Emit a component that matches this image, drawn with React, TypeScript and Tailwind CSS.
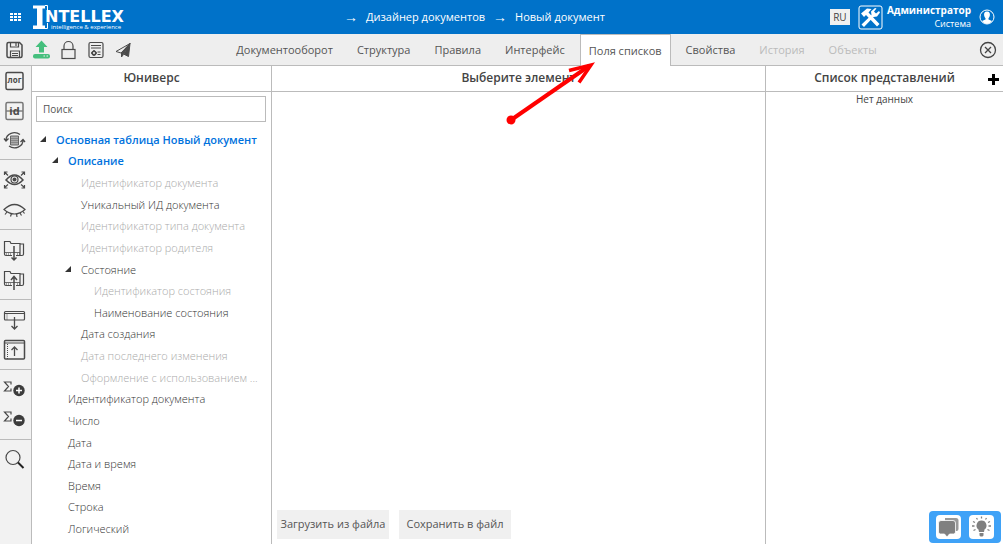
import { useState, ReactNode } from "react";
import clsx from "clsx";

type TreeItem = {
  text: string;
  level: number;
  open?: boolean;
  main?: boolean;
  disabled?: boolean;
};

const tree: TreeItem[] = [
  { text: "Основная таблица Новый документ", level: 0, open: true, main: true },
  { text: "Описание", level: 1, open: true, main: true },
  { text: "Идентификатор документа", level: 2, disabled: true },
  { text: "Уникальный ИД документа", level: 2 },
  { text: "Идентификатор типа документа", level: 2, disabled: true },
  { text: "Идентификатор родителя", level: 2, disabled: true },
  { text: "Состояние", level: 2, open: true },
  { text: "Идентификатор состояния", level: 3, disabled: true },
  { text: "Наименование состояния", level: 3 },
  { text: "Дата создания", level: 2 },
  { text: "Дата последнего изменения", level: 2, disabled: true },
  { text: "Оформление с использованием ...", level: 2, disabled: true },
  { text: "Идентификатор документа", level: 1 },
  { text: "Число", level: 1 },
  { text: "Дата", level: 1 },
  { text: "Дата и время", level: 1 },
  { text: "Время", level: 1 },
  { text: "Строка", level: 1 },
  { text: "Логический", level: 1 },
];

const indents = ["pl-[5px]", "pl-[17px]", "pl-[30px]", "pl-[43px]"];

const tabs = [
  { name: "Документооборот" },
  { name: "Структура" },
  { name: "Правила" },
  { name: "Интерфейс" },
  { name: "Поля списков" },
  { name: "Свойства" },
  { name: "История", disabled: true },
  { name: "Объекты", disabled: true },
];

const Icon = ({ children }: { children: ReactNode }) => (
  <svg
    width="24"
    height="24"
    viewBox="0 0 24 24"
    fill="none"
    stroke="#4a4a4a"
    strokeWidth="1.5"
    aria-hidden="true"
  >
    {children}
  </svg>
);

const toolbar = [
  {
    label: "Сохранить",
    icon: (
      <>
        <path d="M6.500 4.500h11l2.500 2.500v11q0 1.500-1.500 1.500h-12q-1.500 0-1.500-1.500V6q0-1.500 1.500-1.500z" />
        <path d="M8.500 4.500v4.500h8V4.500M14 5v3M8.500 19.500v-6.500h9v6.500M10 15.500h6M10 17.500h6" strokeWidth="1.200" />
      </>
    ),
  },
  {
    label: "Опубликовать",
    icon: (
      <>
        <path d="M12.500 2.500l6 6.500h-3.500v5.500h-5V9H6.500z" fill="#45bf7d" stroke="none" />
        <rect x="4" y="16" width="17" height="4.500" rx="2" fill="#45bf7d" stroke="none" />
        <path d="M14.500 18h1.500M17.500 18h1.500" stroke="#eee" strokeWidth="1" />
      </>
    ),
  },
  {
    label: "Заблокировать",
    icon: (
      <>
        <rect x="6" y="11.500" width="13" height="9" strokeWidth="1.200" />
        <path d="M8 11.500V8a4.500 4.500 0 0 1 9 0v3.500" strokeWidth="1.200" />
      </>
    ),
  },
  {
    label: "Настройки документа",
    icon: (
      <>
        <rect x="6" y="4.500" width="14" height="15" rx="1.500" strokeWidth="1.200" />
        <path d="M8 7.500h10M8 10h10M14.500 14h3M14.500 16.500h3" strokeWidth="1" />
        <circle cx="11" cy="15" r="1.800" />
        <path d="M11 12v6M8 15h6" strokeDasharray="1.200 3.600" />
      </>
    ),
  },
  {
    label: "Отправить",
    icon: (
      <>
        <path d="M20 5.500L18.500 18.500l-5-2.500zM20 5.500L11.500 15v4l2-2.500" fill="#4a4a4a" strokeWidth="1" />
        <path d="M20 5.500L6 13.500l5 1.500z" strokeWidth="1" />
      </>
    ),
  },
];

const folder = (
  <>
    <path d="M10 17.500H4q-1.500 0-1.500-1.500V3.500H8l1 2h9v12h-4M18 6h3.500v10q0 1.500-1.500 1.500h-2" strokeWidth="1.200" />
    <path d="M3 14.500h15" strokeWidth="0.800" />
    <path d="M4 16h5M15 16h3" strokeWidth="1.200" strokeDasharray="1 1" />
  </>
);

const sigma = (
  <path d="M9 6.500V4H2.500l4 4.500-4 4.500H9v-2.500" strokeWidth="1.200" />
);

const sideGroups = [
  [
    {
      label: "Логическое имя",
      icon: (
        <>
          <rect x="4" y="3.500" width="17" height="17" rx="1.500" />
          <text x="12.500" y="13.500" textAnchor="middle" fontSize="8" fontWeight="700" fill="#4a4a4a" stroke="none">
            лог
          </text>
        </>
      ),
    },
    {
      label: "Скрыть идентификаторы",
      icon: (
        <>
          <rect x="4" y="3.500" width="17" height="17" rx="1.500" stroke="#777" />
          <text x="12.500" y="16" textAnchor="middle" fontSize="11" fontWeight="700" fill="#4a4a4a" stroke="none">
            id
          </text>
          <path d="M4.500 12h16" strokeWidth="1" />
        </>
      ),
    },
    {
      label: "Обновить",
      icon: (
        <>
          <path d="M8.500 7h8v9h-8z" fill="#aaa" stroke="#666" strokeWidth="1" />
          <path d="M8.500 9.500h8M8.500 11.500h8M8.500 13.500h8" stroke="#666" strokeWidth="0.500" />
          <path d="M4 11a8.500 7.500 0 0 1 14-5.500M21 11a8.500 7.500 0 0 1-14 6M2 9.500l2 2.500 2.500-2.500M23 13l-2-2.500-2.500 2.500" strokeWidth="1.300" />
        </>
      ),
    },
  ],
  [
    {
      label: "Показать все",
      icon: (
        <>
          <path d="M4 12q8.500-10 17 0-8.500 9-17 0z" />
          <circle cx="12.500" cy="11.500" r="3.500" strokeWidth="1.200" />
          <circle cx="12.500" cy="11.500" r="2" fill="#4a4a4a" stroke="none" />
          <path d="M6 7.500L2.500 4M2.500 7V4h3M19 7.500L22.500 4M19.500 4h3v3M6 16.500L2.500 19.500M2.500 17v3h3M19 16.500l3.500 3M19.500 20h3v-3" strokeWidth="1.200" />
        </>
      ),
    },
    {
      label: "Скрыть",
      icon: (
        <>
          <path d="M2 11.500q10.500-10 21 0-10.500 9-21 0z" strokeWidth="1.200" />
          <path d="M5 14l-2 2.500M9.500 15.500l-1 3M14.500 16l.5 3M18 15l1.500 2.500M21 13.500l1.500 2" strokeWidth="1.200" />
        </>
      ),
    },
  ],
  [
    {
      label: "Загрузить в папку",
      icon: (
        <>
          {folder}
          <path d="M12 8v14M9.500 19.500l2.500 2.500 2.500-2.500" />
        </>
      ),
    },
    {
      label: "Выгрузить из папки",
      icon: (
        <>
          {folder}
          <path d="M12 22V9M9 12l3-3.500 3 3.500" />
        </>
      ),
    },
  ],
  [
    {
      label: "Добавить ниже",
      icon: (
        <>
          <rect x="2.500" y="3.500" width="20" height="8.500" rx="1" strokeWidth="1.200" />
          <path d="M2.500 5.500h20" strokeWidth="1" />
          <path d="M5 6.500v5" strokeWidth="1" strokeDasharray="1 1" />
          <path d="M12.500 9v11.500M9.500 18l3 3 3-3" strokeWidth="1.300" />
        </>
      ),
    },
    {
      label: "Добавить внутрь",
      icon: (
        <>
          <rect x="2.500" y="2.500" width="20" height="18.500" rx="1" />
          <path d="M2.500 5h20" strokeWidth="1" />
          <path d="M5.500 6v15" strokeWidth="1" strokeDasharray="1 1" />
          <path d="M12.500 18V9M9.500 12l3-3 3 3" strokeWidth="1.300" />
        </>
      ),
    },
  ],
  [
    {
      label: "Добавить сумму",
      icon: (
        <>
          {sigma}
          <circle cx="17" cy="12.500" r="5.700" fill="#3c3c3c" stroke="none" />
          <path d="M14 12.500h6M17 9.500v6" stroke="#fff" />
        </>
      ),
    },
    {
      label: "Убрать сумму",
      icon: (
        <>
          {sigma}
          <circle cx="17" cy="12.500" r="5.700" fill="#3c3c3c" stroke="none" />
          <path d="M14 12.500h6" stroke="#fff" />
        </>
      ),
    },
  ],
  [
    {
      label: "Найти",
      icon: (
        <>
          <circle cx="11" cy="9.500" r="7" strokeWidth="1.200" />
          <path d="M16 14.500l5.500 5.500" strokeWidth="2" stroke="#222" />
        </>
      ),
    },
  ],
];

const Logo = () => (
  <svg width="94" height="28" viewBox="0 0 94 28" fill="#fff" role="img" aria-label="Intellex">
    <path d="M0 2.500h12v3H9.500v17H12V26H0v-3.500h4v-17H0z" />
    <path d="M12 2.500h2.500V8M12 25.500h2.500V20" fill="none" stroke="#fff" />
    <text x="12" y="19" fontSize="16" fontWeight="700" className="font-['DejaVu_Sans',sans-serif]">
      NTELLEX
    </text>
    <text x="18" y="26" fontSize="6">
      intelligence &amp; experience
    </text>
  </svg>
);

const Header = () => (
  <header className="flex h-[34px] shrink-0 items-center bg-[#0072c9] text-white">
    <button aria-label="Меню" className="flex w-[31px] justify-center">
      <svg width="11" height="9" viewBox="0 0 11 9" fill="#fff">
        {[0, 3, 6].map((y) =>
          [0, 4, 8].map((x) => <rect key={`${x}-${y}`} x={x} y={y} width="3" height="2" />)
        )}
      </svg>
    </button>
    <a href="#" className="ml-[2px]">
      <Logo />
    </a>
    <nav className="flex flex-1 items-center justify-center gap-2 pr-2 text-[11px]">
      <span className="text-sm leading-4">→</span>
      <a href="#">Дизайнер документов</a>
      <span className="text-sm leading-4">→</span>
      <a href="#">Новый документ</a>
    </nav>
    <button className="h-4 w-5 bg-[#f0f0f0] text-[10px] leading-4 text-[#444]">RU</button>
    <button aria-label="Инструменты" className="ml-2">
      <svg width="25" height="25" viewBox="0 0 25 25" fill="none" stroke="#fff">
        <rect x="1" y="1" width="23" height="23" rx="2" />
        <path d="M3 8.500l6-5 4.500.5-3 3.500L21.500 19 19 21.500 8 10l-2 2z" fill="#fff" stroke="none" />
        <path d="M3.500 19.500l10-9.500-.5-3.500 4-3.500 1.500.5-2.500 3 2 2 3-2.500 1 1.500-3 4-3.500.5L6 22z" fill="#fff" stroke="none" />
      </svg>
    </button>
    <div className="ml-1 text-right text-[10px] leading-[13px]">
      <div className="font-bold">Администратор</div>
      <div className="text-[9px]">Система</div>
    </div>
    <button aria-label="Профиль" className="mx-2">
      <svg width="16" height="16" viewBox="0 0 16 16">
        <circle cx="8" cy="8" r="7" fill="none" stroke="#fff" />
        <path d="M8 2.500c2.500 0 3.300 2 2.800 4.200-.3 1.300-.8 2-1.300 2.500v1.300l3.500 1.500A6.500 6.500 0 0 1 8 15a6.500 6.500 0 0 1-5-3l3.500-1.500V9.200C6 8.700 5.500 8 5.200 6.700 4.700 4.500 5.500 2.500 8 2.500z" fill="#fff" />
      </svg>
    </button>
  </header>
);

const PanelTitle = ({ children }: { children: ReactNode }) => (
  <h2 className="flex h-[26px] shrink-0 items-center justify-center border-b border-[#bbb] pb-px text-xs font-semibold text-[#444]">
    {children}
  </h2>
);

const App = () => {
  const [active, setActive] = useState("Поля списков");
  const [search, setSearch] = useState("");

  return (
    <div className="relative flex h-screen min-h-[544px] flex-col overflow-hidden bg-white font-['Open_Sans',sans-serif] text-[#444]">
      <Header />

      <div className="flex h-8 shrink-0 items-stretch border-b border-[#bbb] bg-[#eee]">
        <div className="flex items-center gap-[3px] pl-[2px]">
          {toolbar.map((b) => (
            <button key={b.label} aria-label={b.label}>
              <Icon>{b.icon}</Icon>
            </button>
          ))}
        </div>
        <nav className="flex flex-1 justify-center gap-[6px] text-[11px]">
          {tabs.map((t) => (
            <button
              key={t.name}
              disabled={t.disabled}
              onClick={() => setActive(t.name)}
              className={clsx(
                "border-x border-t px-2 pt-px",
                t.name === active
                  ? "-mb-px border-[#bbb] bg-white"
                  : "border-transparent",
                t.disabled ? "text-[#bbb]" : "text-[#555]"
              )}
            >
              {t.name}
            </button>
          ))}
        </nav>
        <button aria-label="Закрыть" className="mr-[6px]">
          <svg width="18" height="18" viewBox="0 0 18 18" fill="none" stroke="#444" strokeWidth="1.300">
            <circle cx="9" cy="9" r="7.500" />
            <path d="M6 6l6 6M12 6l-6 6" />
          </svg>
        </button>
      </div>

      <div className="flex min-h-0 flex-1">
        <aside className="w-8 shrink-0 border-r border-[#bbb] bg-[#f2f2f2]">
          {sideGroups.map((group, i) => (
            <div
              key={i}
              className={clsx(
                "flex flex-col",
                i === 0 ? "pb-[3px]" : "pt-[5px] pb-1",
                i < sideGroups.length - 1 && "border-b border-[#bbb]"
              )}
            >
              {group.map((b) => (
                <button
                  key={b.label}
                  aria-label={b.label}
                  className="flex h-[30px] items-center pl-[2px]"
                >
                  <Icon>{b.icon}</Icon>
                </button>
              ))}
            </div>
          ))}
        </aside>

        <section className="flex w-60 shrink-0 flex-col border-r border-[#bbb]">
          <PanelTitle>Юниверс</PanelTitle>
          <div className="pt-1 pr-[5px] pl-1">
            <input
              type="text"
              aria-label="Поиск"
              placeholder="Поиск"
              value={search}
              onChange={(e) => setSearch(e.target.value)}
              className="block h-[26px] w-full border border-[#bbb] px-[6px] text-[10px] placeholder:text-[#555]"
            />
          </div>
          <ul className="mt-[7px] mb-1 flex min-h-0 flex-1 flex-col text-[11px] leading-5">
            {tree.map((item, i) => (
              <li
                key={i}
                className={clsx(
                  "flex max-h-6 flex-1 items-center whitespace-nowrap",
                  indents[item.level],
                  item.main ? "font-semibold text-[#0072dd]" : "font-[350]",
                  !item.main && (item.disabled ? "text-[#aaa]" : "text-[#333]")
                )}
              >
                <span className="flex w-[19px] shrink-0 pl-[3px]">
                  {item.open && (
                    <svg width="6" height="8" viewBox="0 0 6 8" fill="#333">
                      <path d="M6 0v6H0z" />
                    </svg>
                  )}
                </span>
                {item.text}
              </li>
            ))}
          </ul>
        </section>

        <section className="flex min-w-0 flex-1 flex-col border-r border-[#bbb]">
          <PanelTitle>Выберите элемент</PanelTitle>
          <div className="mt-auto flex gap-[10px] pb-[5px] pl-[5px] text-[11px] whitespace-nowrap text-[#555]">
            <button className="h-[29px] w-28 bg-[#f0f0f0]">Загрузить из файла</button>
            <button className="h-[29px] w-28 bg-[#f0f0f0]">Сохранить в файл</button>
          </div>
        </section>

        <section className="flex w-[237px] shrink-0 flex-col">
          <div className="relative">
            <PanelTitle>Список представлений</PanelTitle>
            <button aria-label="Добавить" className="absolute top-2 right-1">
              <svg width="11" height="11" viewBox="0 0 11 11" stroke="#000" strokeWidth="3">
                <path d="M5.500 0v11M0 5.500h11" />
              </svg>
            </button>
          </div>
          <p className="text-center text-[10px] leading-[14px]">Нет данных</p>
        </section>
      </div>

      <svg
        width="90"
        height="64"
        viewBox="0 0 90 64"
        className="pointer-events-none absolute top-[61px] left-[505px]"
        fill="none"
        stroke="#f00"
        strokeWidth="4"
      >
        <circle cx="6" cy="59" r="4.500" fill="#f00" stroke="none" />
        <path d="M6 59L84 5" />
        <path d="M64 9.500L86 4 74 21.500" strokeWidth="3.500" />
      </svg>

      <div className="absolute right-[2px] bottom-px flex gap-2 rounded bg-[#3fa2f7] px-[7px] py-1">
        <button aria-label="Чат" className="rounded bg-white">
          <svg width="25" height="24" viewBox="0 0 25 24">
            <path d="M9 3h11q2.500 0 2.500 2.500V14q0 2-2 2H9z" fill="#999" />
            <path d="M5 5.500h12q2.500 0 2.500 2.500V17q0 2-2 2h-4L11 22l-2.500-3H4.500q-2 0-2-2V8q0-2.500 2.500-2.500z" fill="#808080" stroke="#fff" strokeWidth="0.800" />
          </svg>
        </button>
        <button aria-label="Подсказка" className="rounded bg-white">
          <svg width="25" height="24" viewBox="0 0 25 24">
            <path d="M12.500 5.500a5 5 0 0 1 3 9l-.5 2.500h-5l-.5-2.500a5 5 0 0 1 3-9zM10.500 18h4v2.500l-1 1h-2l-1-1z" fill="#808080" />
            <path d="M12.500 1.500v2M7.500 3l1 1.500M17.500 3l-1 1.500M4 6.500l2 1M21 6.500l-2 1M3 11h2.500M22 11h-2.500M4.500 15.500l2-1M20.500 15.500l-2-1" stroke="#808080" strokeWidth="1.300" />
          </svg>
        </button>
      </div>
    </div>
  );
};

export default App;
